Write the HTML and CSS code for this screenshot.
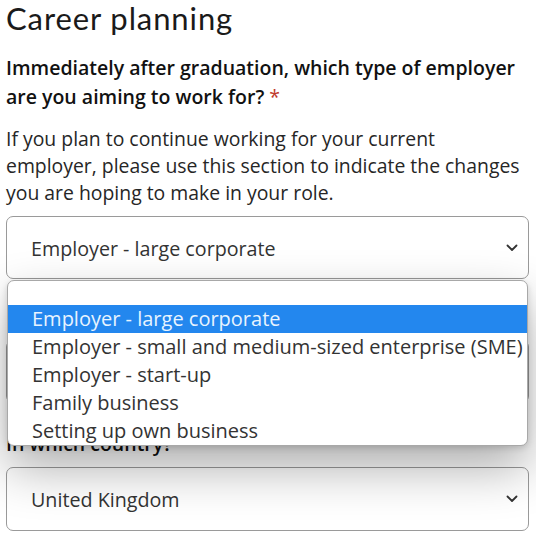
FILE: index.html
```html
<!DOCTYPE html>
<html lang="en">
<head>
<meta charset="utf-8">
<title>Career planning</title>
<link rel="stylesheet" href="styles.css">
</head>
<body>
<main class="page">
  <h1 class="title">Career planning</h1>
  <p class="question">Immediately after graduation, which type of employer are you aiming to work for? <span class="req">*</span></p>
  <p class="hint">If you plan to continue working for your current employer, please use this section to indicate the changes you are hoping to make in your role.</p>
  <div class="field">
    <div class="select">
      <span class="value">Employer - large corporate</span>
      <svg class="chev" width="12" height="8" viewBox="0 0 12 8"><path d="M1.5 1.5 L6 6 L10.5 1.5" fill="none" stroke="#333" stroke-width="1.8" stroke-linecap="round" stroke-linejoin="round"/></svg>
    </div>
    <ul class="dropdown">
      <li class="opt opt-empty"></li>
      <li class="opt selected">Employer - large corporate</li>
      <li class="opt">Employer - small and medium-sized enterprise (SME)</li>
      <li class="opt">Employer - start-up</li>
      <li class="opt">Family business</li>
      <li class="opt">Setting up own business</li>
    </ul>
  </div>
  <div class="label-spacer"></div>
  <div class="select"></div>
  <p class="question label">In which country?</p>
  <div class="select tall">
    <span class="value">United Kingdom</span>
    <svg class="chev" width="12" height="8" viewBox="0 0 12 8"><path d="M1.5 1.5 L6 6 L10.5 1.5" fill="none" stroke="#333" stroke-width="1.8" stroke-linecap="round" stroke-linejoin="round"/></svg>
  </div>
</main>
</body>
</html>
```

FILE: styles.css
```css
* { box-sizing: border-box; }
html, body { margin: 0; padding: 0; background: #fff; }
body { width: 536px; height: 539px; overflow: hidden; }
.page {
  padding: 0 7px 0 6px;
  font-family: "Open Sans", "Liberation Sans", sans-serif;
  color: #1a1a1a;
}
.title {
  margin: 0;
  font-family: Lato, "Open Sans", sans-serif;
  font-weight: 400;
  font-size: 31px;
  letter-spacing: 0.9px;
  line-height: 36px;
  color: #1a1a1a;
}
.question {
  margin: 17px 0 0;
  font-size: 19.5px;
  line-height: 29px;
  font-weight: 600;
  color: #111;
}
.req { color: #c0392b; font-weight: 400; }
.hint {
  margin: 14px 0 0;
  max-width: 517px;
  font-size: 19.4px;
  line-height: 27px;
  color: #262626;
}
.field { position: relative; margin-top: 10px; }
.select {
  height: 63px;
  border: 1px solid #9a9a9a;
  border-radius: 7px;
  background: #fff;
  display: flex;
  align-items: center;
  justify-content: space-between;
  padding: 0 10px 0 24px;
  font-size: 19.7px;
  color: #333;
}
.select.tall { height: 64px; }
.value { padding-top: 1px; }
.chev { display: block; }
.dropdown {
  position: absolute;
  top: 64px;
  left: 1px;
  right: 1px;
  margin: 0;
  padding: 0;
  list-style: none;
  background: #fff;
  border: 1px solid #a8a8a8;
  border-radius: 7px;
  box-shadow: 0 22px 50px rgba(0,0,0,0.32), 0 2px 6px rgba(0,0,0,0.15);
  overflow: hidden;
  z-index: 2;
}
.opt {
  height: 28px;
  line-height: 28px;
  padding-left: 24px;
  font-size: 20px;
  color: #333;
  white-space: nowrap;
}
.opt-empty { height: 24px; }
.opt.selected { background: #2387ee; color: #e8f4ff; }
.label-spacer { height: 61px; }
.question.label { margin: 26px 0 9px; }
```
